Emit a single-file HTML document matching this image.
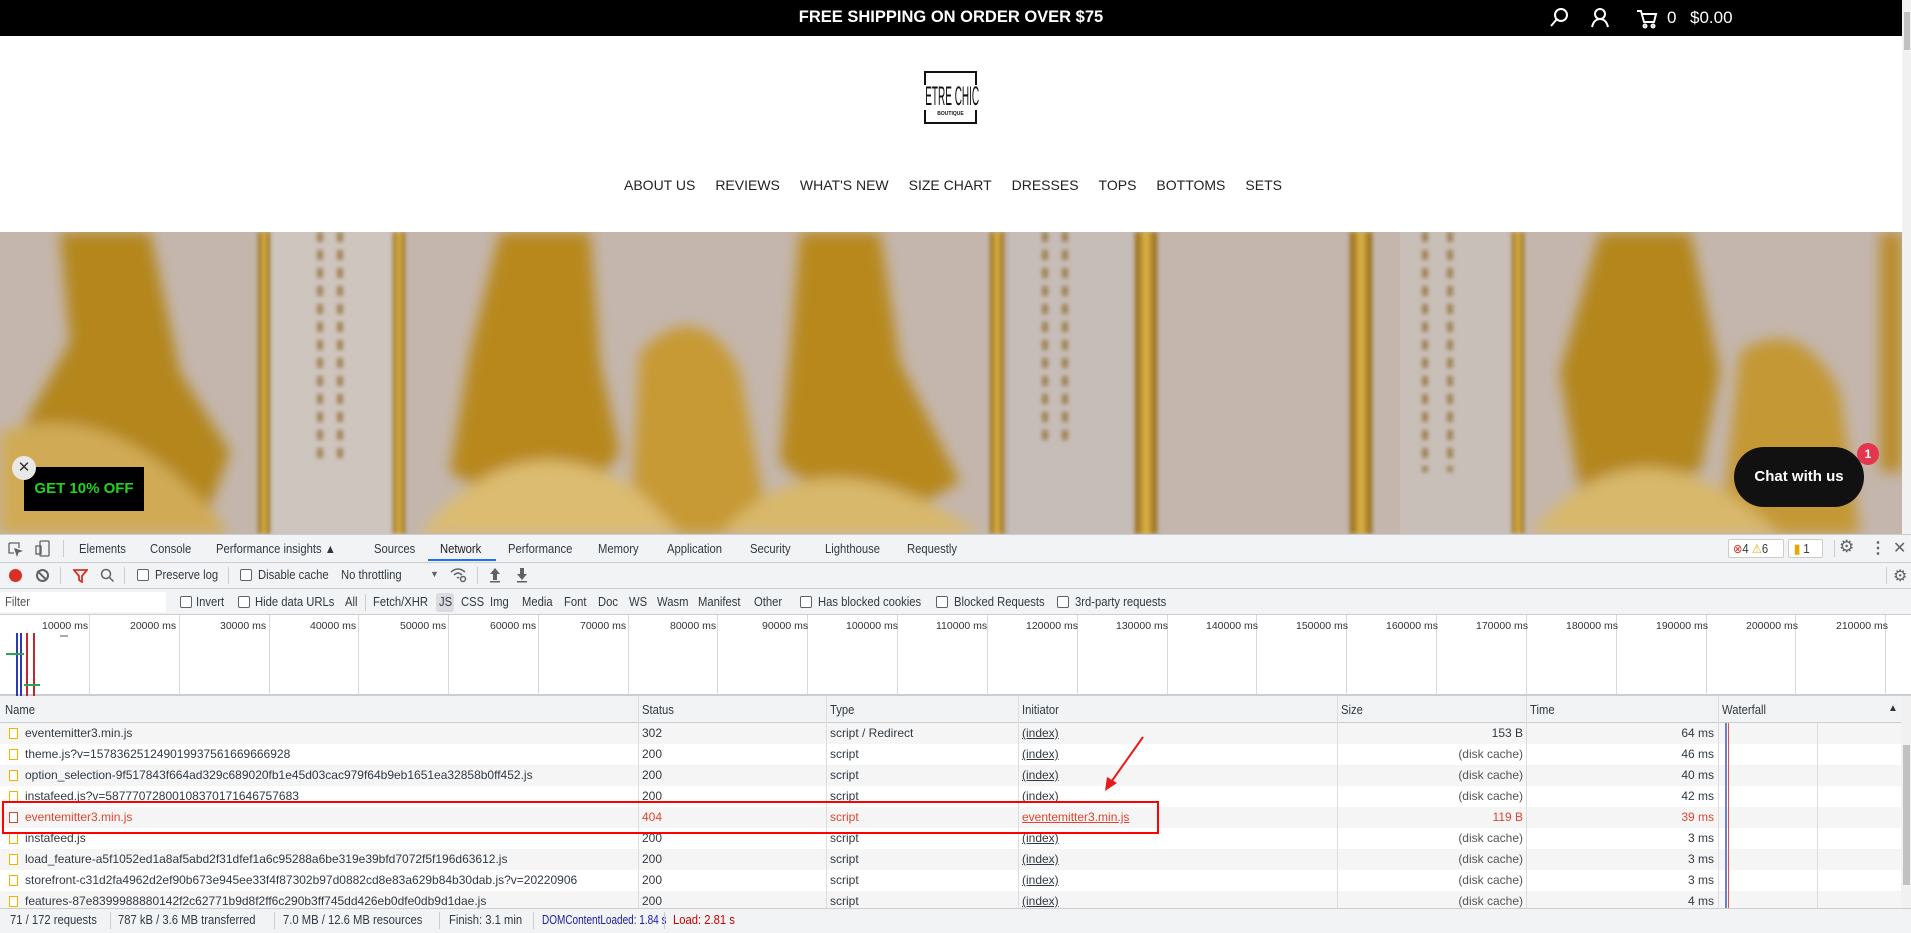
<!DOCTYPE html>
<html><head><meta charset="utf-8"><style>
*{box-sizing:border-box;margin:0;padding:0}
body{width:1911px;height:933px;overflow:hidden;background:#fff;font-family:"Liberation Sans",Arial,sans-serif;position:relative}
.a{position:absolute;white-space:nowrap}
.dt{font-size:12.5px;color:#303942;transform:scaleX(.9);transform-origin:left}
.cb{position:absolute;width:12px;height:12px;border:1px solid #5f6368;border-radius:2px;background:#fff}
.row{position:absolute;left:0;width:1901px;height:21px;font-size:12px;color:#303942}
.row span{position:absolute;top:3px;white-space:nowrap}
.ic{position:absolute;left:9px;top:5px;width:9px;height:11px;border:1px solid #f0b400;background:#fff}
.vl{position:absolute;top:0;width:1px;background:#d9d9d9}
</style></head><body>
<div class="a" style="left:0;top:0;width:1902px;height:36px;background:#000"></div>
<div class="a" style="left:0;top:8px;width:1902px;text-align:center;color:#fff;font-size:16.5px;font-weight:bold;">FREE SHIPPING ON ORDER OVER $75</div>
<svg class="a" style="left:1548px;top:7px" width="22" height="22" viewBox="0 0 22 22" fill="none" stroke="#fff" stroke-width="2"><circle cx="13" cy="8" r="6"/><path d="M9 12L3 19"/></svg>
<svg class="a" style="left:1590px;top:7px" width="20" height="22" viewBox="0 0 20 22" fill="none" stroke="#fff" stroke-width="2"><circle cx="10" cy="7" r="5"/><path d="M2 20Q4 12 10 12Q16 12 18 20"/></svg>
<svg class="a" style="left:1636px;top:9px" width="22" height="20" viewBox="0 0 22 20" fill="none" stroke="#fff" stroke-width="2"><path d="M1 2H5L8 13H18L20 5H6"/><circle cx="9" cy="17" r="1.5"/><circle cx="17" cy="17" r="1.5"/></svg>
<div class="a" style="left:1667px;top:8px;color:#fff;font-size:17px">0</div>
<div class="a" style="left:1690px;top:8px;color:#fff;font-size:17px">$0.00</div>
<div class="a" style="left:1902px;top:0;width:9px;height:534px;background:#f1f1f1"></div>
<div class="a" style="left:1904px;top:12px;width:6px;height:38px;background:#c1c1c1"></div>
<!-- logo -->
<div class="a" style="left:924px;top:71px;width:53px;height:53px;border-top:2px solid #111;border-bottom:2px solid #111"></div>
<div class="a" style="left:924px;top:71px;width:2px;height:14px;background:#111"></div>
<div class="a" style="left:975px;top:71px;width:2px;height:14px;background:#111"></div>
<div class="a" style="left:924px;top:110px;width:2px;height:14px;background:#111"></div>
<div class="a" style="left:975px;top:110px;width:2px;height:14px;background:#111"></div>
<div class="a" style="left:900px;top:82px;width:101px;text-align:center;font-size:20px;color:#111;transform:scale(.5,1.35);transform-origin:center top;font-weight:300">ETRE CHIC</div>
<div class="a" style="left:924px;top:111px;width:53px;text-align:center;font-size:5px;font-weight:bold;color:#111">BOUTIQUE</div>
<!-- nav -->
<div class="a" style="left:624px;top:177px;font-size:14px;color:#222">
<span style="margin-right:20px">ABOUT US</span><span style="margin-right:20px">REVIEWS</span><span style="margin-right:20px">WHAT'S NEW</span><span style="margin-right:20px">SIZE CHART</span><span style="margin-right:20px">DRESSES</span><span style="margin-right:20px">TOPS</span><span style="margin-right:20px">BOTTOMS</span><span>SETS</span></div>
<!-- hero -->
<svg class="a" style="left:0;top:232px" width="1902" height="302" viewBox="0 0 1902 302">
<defs><filter id="b" x="-20%" y="-20%" width="140%" height="140%"><feGaussianBlur stdDeviation="7"/></filter>
<filter id="b2"><feGaussianBlur stdDeviation="2"/></filter>
<linearGradient id="g" x1="0" x2="1"><stop offset="0" stop-color="#8a5f10"/><stop offset=".5" stop-color="#e0b84a"/><stop offset="1" stop-color="#8a5f10"/></linearGradient></defs>
<rect width="1902" height="302" fill="#c4b6ad"/>
<rect x="270" width="130" height="302" fill="#cfc5bf"/>
<rect x="1010" width="130" height="302" fill="#c7bdb8"/>
<rect x="1400" width="120" height="302" fill="#c9bfb9"/>
<g filter="url(#b2)">
<rect x="258" width="12" height="302" fill="url(#g)"/>
<rect x="393" width="12" height="302" fill="url(#g)"/>
<rect x="990" width="14" height="302" fill="url(#g)"/>
<rect x="1135" width="22" height="302" fill="url(#g)"/>
<rect x="1350" width="22" height="302" fill="url(#g)"/>
<rect x="1512" width="12" height="302" fill="url(#g)"/>
<path d="M320 0v230M340 0v230M1045 0v210M1065 0v210M1425 0v240M1450 0v240" stroke="#8a6a2a" stroke-width="6" stroke-dasharray="10 8" opacity=".7"/>
</g>
<g filter="url(#b)">
<path d="M60 0L150 0L180 140L230 220L200 302L40 302L20 200L70 110Z" fill="#b4861e"/>
<path d="M0 200Q120 160 230 302L0 302Z" fill="#d0aa55"/>
<path d="M500 0L590 0L600 130L620 220L560 302L450 240L470 120Z" fill="#b8881c"/>
<path d="M800 0L880 0L900 130L960 250L870 302L780 230L790 120Z" fill="#b8881c"/>
<path d="M640 120Q700 60 740 140L770 302L630 302Z" fill="#c79a35"/>
<path d="M420 302Q520 180 640 260L680 302Z" fill="#dcbc70"/>
<path d="M720 302Q820 190 980 302Z" fill="#d8b86a"/>
<path d="M1600 0L1690 0L1720 140L1700 240L1580 260L1560 140Z" fill="#b4861e"/>
<path d="M1740 120Q1800 80 1840 160L1860 302L1720 302Z" fill="#c49836"/>
<path d="M1530 302Q1640 170 1780 302Z" fill="#d8b86a"/>
<rect x="1880" y="0" width="22" height="240" fill="#b98c2a"/>
</g>
</svg>
<div class="a" style="left:24px;top:467px;width:120px;height:44px;background:#000;color:#1ed61e;font-weight:bold;font-size:15px;line-height:44px;text-align:center">GET 10% OFF</div>
<div class="a" style="left:12px;top:456px;width:24px;height:24px;border-radius:50%;background:#e8e8e8;color:#333;font-size:15px;line-height:23px;text-align:center">✕</div>
<div class="a" style="left:1734px;top:447px;width:130px;height:60px;border-radius:30px;background:#111;color:#fff;font-weight:bold;font-size:15px;line-height:60px;text-align:center">Chat with us</div>
<div class="a" style="left:1857px;top:443px;width:22px;height:22px;border-radius:50%;background:#e5354f;color:#fff;font-weight:bold;font-size:12px;line-height:22px;text-align:center">1</div>

<!-- devtools -->
<div class="a" style="left:0;top:534px;width:1911px;height:399px;background:#fff"></div>
<div class="a" style="left:0;top:534px;width:1911px;height:29px;background:#f1f3f4;border-top:1px solid #cbcdd1;border-bottom:1px solid #cbcdd1"></div>
<svg class="a" style="left:7px;top:541px" width="16" height="16" fill="none" stroke="#5f6368" stroke-width="1.3"><path d="M2 2h10v5M2 2v10h5"/><path d="M8 8l6 2-3 1-1 3z" fill="#5f6368"/></svg>
<svg class="a" style="left:35px;top:540px" width="16" height="18" fill="none" stroke="#5f6368" stroke-width="1.3"><rect x="5" y="1" width="9" height="15" rx="1"/><rect x="1" y="6" width="5" height="8"/></svg>
<div class="a" style="left:63px;top:540px;width:1px;height:17px;background:#ccc"></div>
<div class="a dt" style="left:79px;top:542px">Elements</div>
<div class="a dt" style="left:150px;top:542px">Console</div>
<div class="a dt" style="left:216px;top:542px">Performance insights ▲</div>
<div class="a dt" style="left:374px;top:542px">Sources</div>
<div class="a dt" style="left:440px;top:542px;color:#202124">Network</div>
<div class="a" style="left:428px;top:559px;width:68px;height:2px;background:#1a73e8"></div>
<div class="a dt" style="left:508px;top:542px">Performance</div>
<div class="a dt" style="left:598px;top:542px">Memory</div>
<div class="a dt" style="left:667px;top:542px">Application</div>
<div class="a dt" style="left:750px;top:542px">Security</div>
<div class="a dt" style="left:825px;top:542px">Lighthouse</div>
<div class="a dt" style="left:907px;top:542px">Requestly</div>
<div class="a" style="left:1728px;top:539px;width:56px;height:19px;border:1px solid #ccc;border-radius:2px;background:#fff"></div>
<div class="a dt" style="left:1733px;top:541px"><span style="color:#d93025">⊗</span>4 <span style="color:#e6a700">⚠</span>6</div>
<div class="a" style="left:1788px;top:539px;width:35px;height:19px;border:1px solid #ccc;border-radius:2px;background:#fff"></div>
<div class="a dt" style="left:1794px;top:541px"><span style="color:#e6a700;font-weight:bold">▮</span> 1</div>
<div class="a" style="left:1834px;top:540px;width:1px;height:17px;background:#ccc"></div>
<div class="a" style="left:1839px;top:537px;font-size:17px;color:#5f6368">⚙</div>
<div class="a" style="left:1870px;top:538px;font-size:16px;color:#5f6368;font-weight:bold">⋮</div>
<div class="a" style="left:1893px;top:538px;font-size:16px;color:#5f6368">✕</div>
<div class="a" style="left:0;top:563px;width:1911px;height:26px;background:#f1f3f4;border-bottom:1px solid #cbcdd1"></div>
<div class="a" style="left:9px;top:569px;width:13px;height:13px;border-radius:50%;background:#d93025"></div>
<div class="a" style="left:36px;top:569px;width:13px;height:13px;border-radius:50%;border:2px solid #5f6368"></div>
<div class="a" style="left:41px;top:569px;width:2px;height:13px;background:#5f6368;transform:rotate(-45deg)"></div>
<div class="a" style="left:60px;top:567px;width:1px;height:17px;background:#ccc"></div>
<svg class="a" style="left:73px;top:568px" width="15" height="15" fill="none" stroke="#d93025" stroke-width="1.8"><path d="M1 2h13l-5 6v6l-3-2V8z"/></svg>
<svg class="a" style="left:100px;top:568px" width="15" height="15" fill="none" stroke="#5f6368" stroke-width="1.5"><circle cx="6" cy="6" r="4.5"/><path d="M9.5 9.5l4 4"/></svg>
<div class="a" style="left:124px;top:567px;width:1px;height:17px;background:#ccc"></div>
<div class="cb" style="left:137px;top:569px"></div><div class="a dt" style="left:155px;top:568px">Preserve log</div>
<div class="a" style="left:228px;top:567px;width:1px;height:17px;background:#ccc"></div>
<div class="cb" style="left:240px;top:569px"></div><div class="a dt" style="left:258px;top:568px">Disable cache</div>
<div class="a dt" style="left:341px;top:568px">No throttling</div>
<div class="a" style="left:430px;top:569px;font-size:9px;color:#5f6368">▼</div>
<svg class="a" style="left:450px;top:567px" width="18" height="16" fill="none" stroke="#5f6368" stroke-width="1.5"><path d="M1 5Q8-1 15 5M4 8Q8 4 12 8M7 11Q8 10 9 11"/><circle cx="13" cy="12" r="2.5"/></svg>
<div class="a" style="left:477px;top:567px;width:1px;height:17px;background:#ccc"></div>
<svg class="a" style="left:489px;top:567px" width="12" height="16" fill="#5f6368"><path d="M6 1L11 7H8V13H4V7H1Z"/><rect x="1" y="14" width="10" height="1.5"/></svg>
<svg class="a" style="left:516px;top:567px" width="12" height="16" fill="#5f6368"><path d="M6 13L11 7H8V1H4V7H1Z"/><rect x="1" y="14" width="10" height="1.5"/></svg>
<div class="a" style="left:1893px;top:566px;font-size:16px;color:#5f6368">⚙</div>
<div class="a" style="left:1886px;top:567px;width:1px;height:17px;background:#ccc"></div>
<div class="a" style="left:0;top:589px;width:1911px;height:26px;background:#f1f3f4;border-bottom:1px solid #cbcdd1"></div>
<div class="a" style="left:0;top:592px;width:166px;height:20px;background:#fff"></div>
<div class="a dt" style="left:5px;top:595px;color:#555">Filter</div>
<div class="cb" style="left:180px;top:596px"></div><div class="a dt" style="left:196px;top:595px">Invert</div>
<div class="cb" style="left:238px;top:596px"></div><div class="a dt" style="left:255px;top:595px">Hide data URLs</div>
<div class="a dt" style="left:345px;top:595px">All</div>
<div class="a" style="left:365px;top:594px;width:1px;height:17px;background:#ccc"></div>
<div class="a dt" style="left:373px;top:595px">Fetch/XHR</div>
<div class="a" style="left:436px;top:593px;width:18px;height:19px;background:#dadce0;border-radius:3px"></div>
<div class="a dt" style="left:439px;top:595px">JS</div>
<div class="a dt" style="left:461px;top:595px">CSS</div>
<div class="a dt" style="left:490px;top:595px">Img</div>
<div class="a dt" style="left:522px;top:595px">Media</div>
<div class="a dt" style="left:564px;top:595px">Font</div>
<div class="a dt" style="left:598px;top:595px">Doc</div>
<div class="a dt" style="left:629px;top:595px">WS</div>
<div class="a dt" style="left:657px;top:595px">Wasm</div>
<div class="a dt" style="left:698px;top:595px">Manifest</div>
<div class="a dt" style="left:754px;top:595px">Other</div>
<div class="cb" style="left:800px;top:596px"></div><div class="a dt" style="left:818px;top:595px">Has blocked cookies</div>
<div class="cb" style="left:936px;top:596px"></div><div class="a dt" style="left:954px;top:595px">Blocked Requests</div>
<div class="cb" style="left:1057px;top:596px"></div><div class="a dt" style="left:1075px;top:595px">3rd-party requests</div>
<div class="a" style="left:0;top:615px;width:1911px;height:81px;background:#fff;border-bottom:2px solid #cbcdd1">
<div class="vl" style="left:89px;height:79px"></div><div class="vl" style="left:179px;height:79px"></div><div class="vl" style="left:269px;height:79px"></div><div class="vl" style="left:358px;height:79px"></div><div class="vl" style="left:448px;height:79px"></div><div class="vl" style="left:538px;height:79px"></div><div class="vl" style="left:628px;height:79px"></div><div class="vl" style="left:717px;height:79px"></div><div class="vl" style="left:807px;height:79px"></div><div class="vl" style="left:897px;height:79px"></div><div class="vl" style="left:987px;height:79px"></div><div class="vl" style="left:1077px;height:79px"></div><div class="vl" style="left:1167px;height:79px"></div><div class="vl" style="left:1256px;height:79px"></div><div class="vl" style="left:1346px;height:79px"></div><div class="vl" style="left:1436px;height:79px"></div><div class="vl" style="left:1526px;height:79px"></div><div class="vl" style="left:1616px;height:79px"></div><div class="vl" style="left:1706px;height:79px"></div><div class="vl" style="left:1795px;height:79px"></div><div class="vl" style="left:1885px;height:79px"></div>
</div>
<div class="a" style="left:0;top:620px;font-size:10.5px;color:#333">
<span class="a" style="left:42px">10000 ms</span><span class="a" style="left:130px">20000 ms</span><span class="a" style="left:220px">30000 ms</span><span class="a" style="left:310px">40000 ms</span><span class="a" style="left:400px">50000 ms</span><span class="a" style="left:490px">60000 ms</span><span class="a" style="left:580px">70000 ms</span><span class="a" style="left:670px">80000 ms</span><span class="a" style="left:762px">90000 ms</span><span class="a" style="left:846px">100000 ms</span><span class="a" style="left:936px">110000 ms</span><span class="a" style="left:1026px">120000 ms</span><span class="a" style="left:1116px">130000 ms</span><span class="a" style="left:1206px">140000 ms</span><span class="a" style="left:1296px">150000 ms</span><span class="a" style="left:1386px">160000 ms</span><span class="a" style="left:1476px">170000 ms</span><span class="a" style="left:1566px">180000 ms</span><span class="a" style="left:1656px">190000 ms</span><span class="a" style="left:1746px">200000 ms</span><span class="a" style="left:1836px">210000 ms</span></div>
<div class="a" style="left:16px;top:633px;width:2px;height:63px;background:#2a3ab0"></div>
<div class="a" style="left:20px;top:633px;width:2px;height:63px;background:#2a3ab0"></div>
<div class="a" style="left:33px;top:633px;width:2px;height:63px;background:#c0262d"></div>
<div class="a" style="left:26px;top:633px;width:2px;height:63px;background:#c0262d"></div>
<div class="a" style="left:6px;top:653px;width:18px;height:2px;background:#2ea44f"></div>
<div class="a" style="left:24px;top:684px;width:16px;height:2px;background:#2ea44f"></div>
<div class="a" style="left:60px;top:635px;width:8px;height:2px;background:#aaa"></div>
<div class="a" style="left:0;top:696px;width:1901px;height:27px;background:#f1f3f4;border-bottom:1px solid #cbcdd1"></div>
<div class="a dt" style="left:5px;top:703px">Name</div>
<div class="a dt" style="left:642px;top:703px">Status</div>
<div class="a dt" style="left:830px;top:703px">Type</div>
<div class="a dt" style="left:1022px;top:703px">Initiator</div>
<div class="a dt" style="left:1341px;top:703px">Size</div>
<div class="a dt" style="left:1530px;top:703px">Time</div>
<div class="a dt" style="left:1722px;top:703px">Waterfall</div>
<div class="a" style="left:1888px;top:703px;font-size:10px;color:#333">▲</div>
<div class="row" style="top:723px;background:#f5f5f5"><i class="ic"></i><span style="left:25px">eventemitter3.min.js</span><span style="left:642px">302</span><span style="left:830px">script / Redirect</span><span style="left:1022px;text-decoration:underline">(index)</span><span style="right:378px">153 B</span><span style="right:187px">64 ms</span></div>
<div class="row" style="top:744px"><i class="ic"></i><span style="left:25px">theme.js?v=157836251249019937561669666928</span><span style="left:642px">200</span><span style="left:830px">script</span><span style="left:1022px;text-decoration:underline">(index)</span><span style="right:378px;color:#555">(disk cache)</span><span style="right:187px">46 ms</span></div>
<div class="row" style="top:765px;background:#f5f5f5"><i class="ic"></i><span style="left:25px">option_selection-9f517843f664ad329c689020fb1e45d03cac979f64b9eb1651ea32858b0ff452.js</span><span style="left:642px">200</span><span style="left:830px">script</span><span style="left:1022px;text-decoration:underline">(index)</span><span style="right:378px;color:#555">(disk cache)</span><span style="right:187px">40 ms</span></div>
<div class="row" style="top:786px"><i class="ic"></i><span style="left:25px">instafeed.js?v=58777072800108370171646757683</span><span style="left:642px">200</span><span style="left:830px">script</span><span style="left:1022px;text-decoration:underline">(index)</span><span style="right:378px;color:#555">(disk cache)</span><span style="right:187px">42 ms</span></div>
<div class="row" style="top:807px;background:#f5f5f5;color:#e0442f"><i class="ic" style="border-color:#e0442f"></i><span style="left:25px">eventemitter3.min.js</span><span style="left:642px">404</span><span style="left:830px">script</span><span style="left:1022px;text-decoration:underline">eventemitter3.min.js</span><span style="right:378px">119 B</span><span style="right:187px">39 ms</span></div>
<div class="row" style="top:828px"><i class="ic"></i><span style="left:25px">instafeed.js</span><span style="left:642px">200</span><span style="left:830px">script</span><span style="left:1022px;text-decoration:underline">(index)</span><span style="right:378px;color:#555">(disk cache)</span><span style="right:187px">3 ms</span></div>
<div class="row" style="top:849px;background:#f5f5f5"><i class="ic"></i><span style="left:25px">load_feature-a5f1052ed1a8af5abd2f31dfef1a6c95288a6be319e39bfd7072f5f196d63612.js</span><span style="left:642px">200</span><span style="left:830px">script</span><span style="left:1022px;text-decoration:underline">(index)</span><span style="right:378px;color:#555">(disk cache)</span><span style="right:187px">3 ms</span></div>
<div class="row" style="top:870px"><i class="ic"></i><span style="left:25px">storefront-c31d2fa4962d2ef90b673e945ee33f4f87302b97d0882cd8e83a629b84b30dab.js?v=20220906</span><span style="left:642px">200</span><span style="left:830px">script</span><span style="left:1022px;text-decoration:underline">(index)</span><span style="right:378px;color:#555">(disk cache)</span><span style="right:187px">3 ms</span></div>
<div class="row" style="top:891px;background:#f5f5f5;height:17px;overflow:hidden"><i class="ic"></i><span style="left:25px">features-87e8399988880142f2c62771b9d8f2ff6c290b3ff745dd426eb0dfe0db9d1dae.js</span><span style="left:642px">200</span><span style="left:830px">script</span><span style="left:1022px;text-decoration:underline">(index)</span><span style="right:378px;color:#555">(disk cache)</span><span style="right:187px">4 ms</span></div>
<div class="a" style="left:638px;top:696px;width:1px;height:212px;background:#ddd"></div>
<div class="a" style="left:826px;top:696px;width:1px;height:212px;background:#ddd"></div>
<div class="a" style="left:1018px;top:696px;width:1px;height:212px;background:#ddd"></div>
<div class="a" style="left:1337px;top:696px;width:1px;height:212px;background:#ddd"></div>
<div class="a" style="left:1526px;top:696px;width:1px;height:212px;background:#ddd"></div>
<div class="a" style="left:1718px;top:696px;width:1px;height:212px;background:#ddd"></div>
<div class="a" style="left:1817px;top:723px;width:1px;height:185px;background:#ddd"></div>
<div class="a" style="left:1725px;top:723px;width:2px;height:185px;background:#6d7fd1"></div>
<div class="a" style="left:1728px;top:723px;width:1px;height:185px;background:#d9534f"></div>
<div class="a" style="left:1901px;top:696px;width:10px;height:212px;background:#f1f1f1"></div>
<div class="a" style="left:1903px;top:745px;width:7px;height:140px;background:#c1c1c1"></div>
<div class="a" style="left:2px;top:801px;width:1157px;height:33px;border:2px solid #f00"></div>
<svg class="a" style="left:1095px;top:730px" width="60" height="70"><path d="M48 7L14 55" stroke="#e81b1b" stroke-width="2" fill="none"/><path d="M10 61L12 47L22 53Z" fill="#e81b1b"/></svg>
<div class="a" style="left:0;top:908px;width:1911px;height:25px;background:#f1f3f4;border-top:1px solid #cbcdd1"></div>
<div class="a dt" style="left:10px;top:913px">71 / 172 requests</div>
<div class="a" style="left:110px;top:912px;width:1px;height:17px;background:#ccc"></div>
<div class="a dt" style="left:118px;top:913px">787 kB / 3.6 MB transferred</div>
<div class="a" style="left:274px;top:912px;width:1px;height:17px;background:#ccc"></div>
<div class="a dt" style="left:283px;top:913px">7.0 MB / 12.6 MB resources</div>
<div class="a" style="left:439px;top:912px;width:1px;height:17px;background:#ccc"></div>
<div class="a dt" style="left:449px;top:913px">Finish: 3.1 min</div>
<div class="a" style="left:533px;top:912px;width:1px;height:17px;background:#ccc"></div>
<div class="a dt" style="left:542px;top:913px;color:#1a1aa6;transform:scaleX(.8)">DOMContentLoaded: 1.84 s</div>
<div class="a" style="left:664px;top:912px;width:1px;height:17px;background:#ccc"></div>
<div class="a dt" style="left:673px;top:913px;color:#c80000">Load: 2.81 s</div>
</body></html>
